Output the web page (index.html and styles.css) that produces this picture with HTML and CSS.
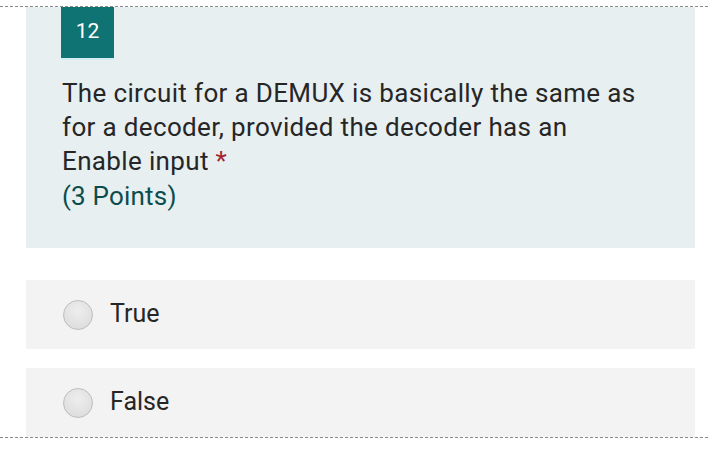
FILE: index.html
```html
<!DOCTYPE html>
<html>
<head>
<meta charset="utf-8">
<link rel="stylesheet" href="styles.css">
</head>
<body>
<div class="page">
  <div class="question">
    <div class="badge">12</div>
    <div class="qtext">The circuit for a DEMUX is basically the same as for a decoder, provided the decoder has an Enable input <span class="req">*</span></div>
    <div class="points">(3 Points)</div>
  </div>
  <div class="options">
    <div class="option"><span class="radio"></span><span class="label">True</span></div>
    <div class="option"><span class="radio"></span><span class="label">False</span></div>
  </div>
</div>
</body>
</html>
```
FILE: styles.css
```css
html, body { margin: 0; padding: 0; background: #fff; }
body { font-family: Roboto, "Noto Sans", sans-serif; width: 708px; height: 462px; overflow: hidden; }
.page {
  margin-top: 6px;
  border-top: 1px dashed #8a8a8a;
  border-bottom: 1px dashed #8a8a8a;
  padding: 0 13px 0 26px;
}
.question {
  background: #e7eff1;
  height: 241px;
  padding: 0 35px 0 36px;
  box-sizing: border-box;
}
.badge {
  width: 53px;
  height: 53px;
  background: #0f7373;
  color: #fff;
  font-size: 21px;
  display: flex;
  align-items: center;
  justify-content: center;
  border-bottom: 2px solid #d2eef2;
  box-sizing: border-box;
  padding-bottom: 4px;
  margin-left: -1px;
}
.qtext {
  margin-top: 16px;
  font-size: 26px;
  line-height: 34px;
  color: #262626;
  width: 580px;
  letter-spacing: 0.35px;
}
.req { color: #a4262c; }
.points {
  font-size: 26px;
  line-height: 34px;
  color: #0b4d4d;
  margin-top: 1px;
  letter-spacing: 0.2px;
}
.options {
  margin-top: 32px;
  display: flex;
  flex-direction: column;
  gap: 19px;
}
.option {
  background: #f3f3f3;
  height: 69px;
  display: flex;
  align-items: center;
  padding-left: 37px;
  padding-bottom: 2px;
  box-sizing: border-box;
}
.radio {
  width: 28px;
  height: 28px;
  border-radius: 50%;
  border: 1px solid #bdbdbd;
  background: radial-gradient(circle at 50% 35%, #eeeeee, #d9d9d9);
  margin-right: 17px;
  margin-top: 2px;
  flex: none;
}
.label {
  font-size: 25px;
  color: #262626;
}
```
